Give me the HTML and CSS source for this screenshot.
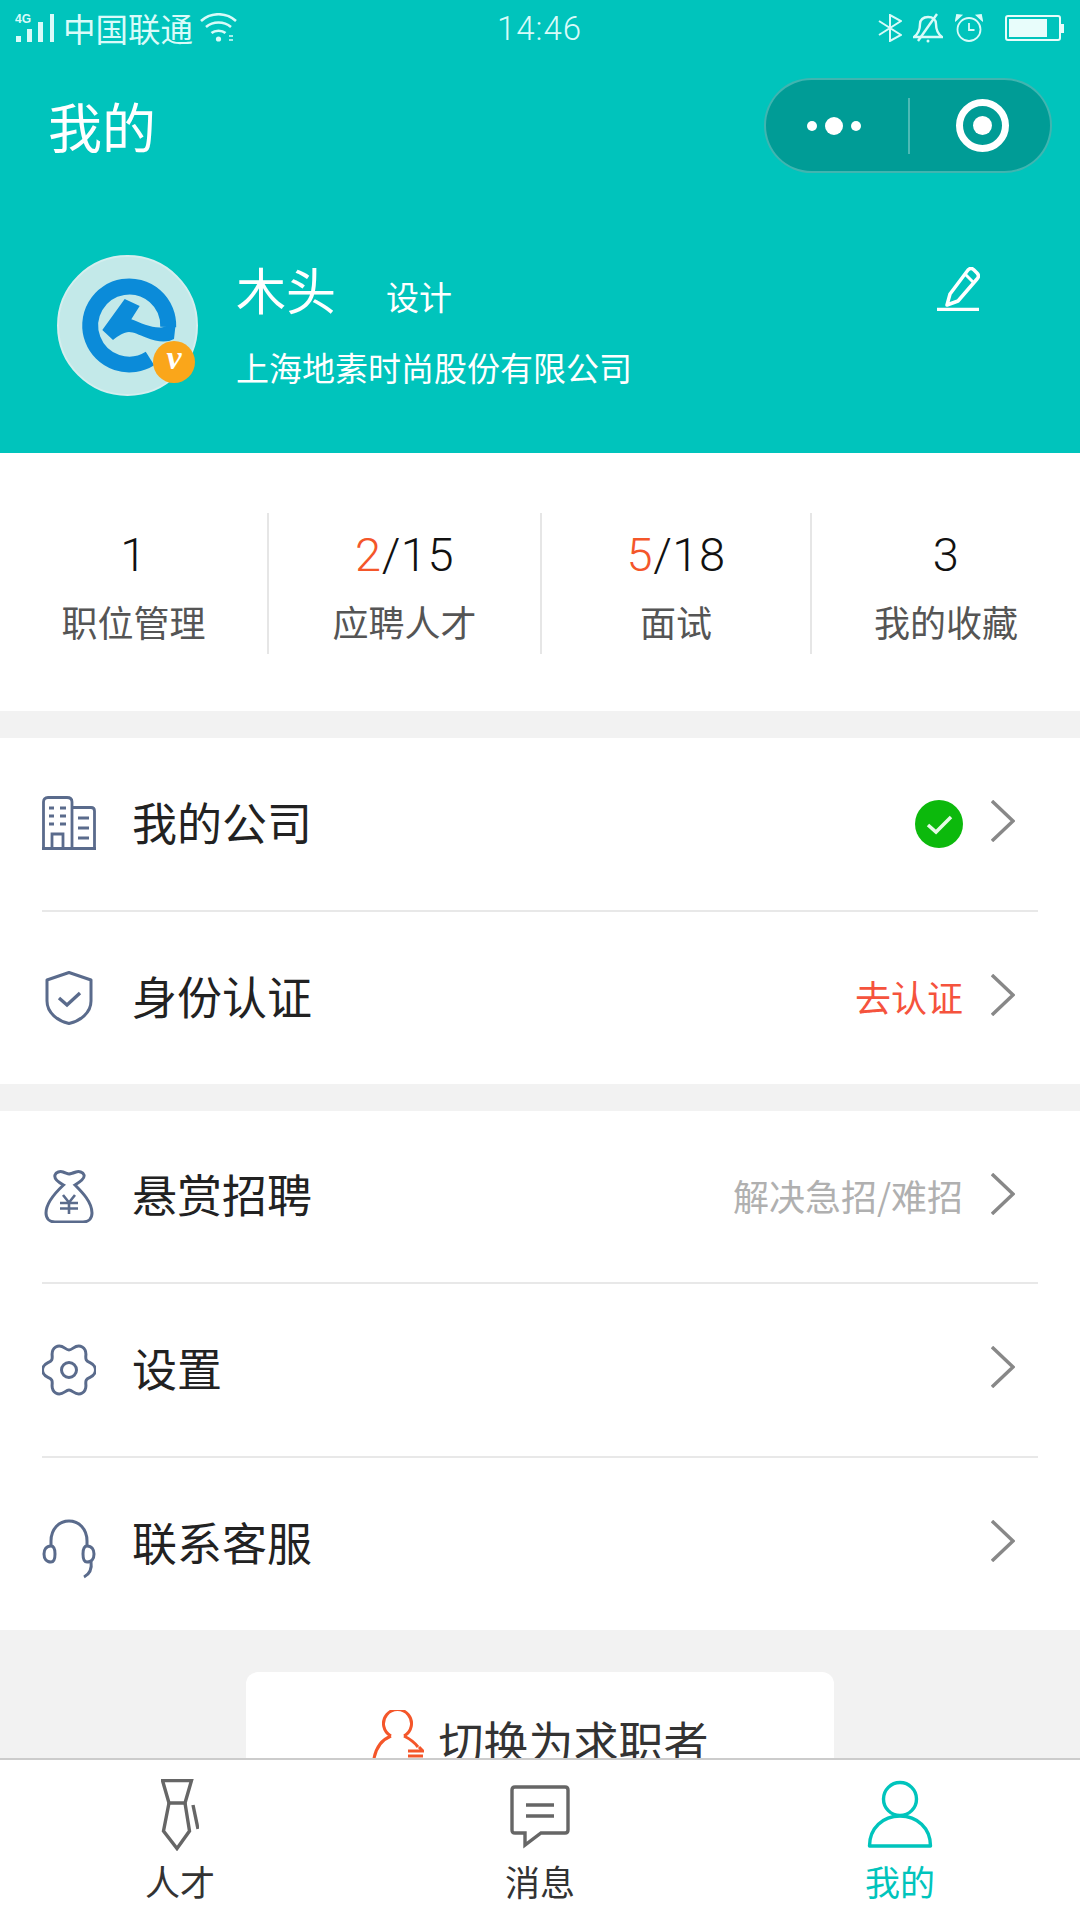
FILE: index.html
```html
<!DOCTYPE html>
<html>

<head>
	<title>我的</title>
	<link rel="stylesheet" href="styles.css">
</head>

<body>
	<div class="page">
		<main class="main">
			<section class="header">
				<div class="status-bar">
					<div class="status-left">
						<svg class="signal" width="40" height="30" viewBox="0 0 40 30">
							<text x="0" y="10" class="signal-text">4G</text>
							<rect x="1" y="23" width="5" height="6" fill="#d9fbf9"/>
							<rect x="12" y="16" width="5" height="13" fill="#d9fbf9"/>
							<rect x="23" y="9" width="5" height="20" fill="#d9fbf9"/>
							<rect x="35" y="1" width="4" height="28" fill="#d9fbf9"/>
						</svg>
						<span class="carrier">中国联通</span>
						<svg class="wifi" width="37" height="30" viewBox="0 0 37 30" fill="none" stroke="#d9fbf9" stroke-width="2.6">
							<path d="M1 8C11 -1 26 -1 36 8"/>
							<path d="M6 14C13 8 24 8 31 14"/>
							<path d="M11.500 20C15 17 22 17 25.500 20"/>
							<circle cx="18.500" cy="26" r="2.600" fill="#d9fbf9" stroke="none"/>
							<path d="M29 23H33M29 27H33" stroke-width="1.500"/>
						</svg>
					</div>
					<div class="status-time">14:46</div>
					<div class="status-right">
						<svg width="24" height="28" viewBox="0 0 24 28" fill="none" stroke="#d9fbf9" stroke-width="2">
							<path d="M1 7L23 21L12 27V1L23 7L1 21"/>
						</svg>
						<svg class="bell" width="30" height="30" viewBox="0 0 30 30" fill="none" stroke="#d9fbf9" stroke-width="2.400">
							<path d="M1 24H29C25 21 23 16 23 11C23 7 20 4 15 4C10 4 7 7 7 11C7 16 5 21 1 24Z"/>
							<path d="M5 28L24 1"/>
							<circle cx="15" cy="28" r="1.500" fill="#d9fbf9" stroke="none"/>
						</svg>
						<svg class="alarm" width="28" height="28" viewBox="0 0 28 28" fill="none" stroke="#d9fbf9" stroke-width="1.800">
							<circle cx="14" cy="15.500" r="11.500"/>
							<path d="M14 9V16H19.500"/>
							<path d="M1 6L6 1.500L2 1ZM27 6L22 1.500L26 1Z" fill="#d9fbf9"/>
						</svg>
						<div class="battery">
							<div class="battery-body"><div class="battery-level"></div></div>
							<div class="battery-cap"></div>
						</div>
					</div>
				</div>

				<div class="nav">
					<h1 class="title">我的</h1>
					<div class="capsule">
						<div class="capsule-more">
							<span class="dot"></span>
							<span class="dot big"></span>
							<span class="dot"></span>
						</div>
						<div class="capsule-close"><span class="target"></span></div>
					</div>
				</div>

				<div class="profile">
					<div class="avatar">
						<svg width="141" height="141" viewBox="0 0 141 141" fill="none">
							<path d="M111.200 72A39 39 0 1 0 93 103.500" stroke="#0b8bd9" stroke-width="16"/>
							<path d="M67.700 44L82.700 51L74.300 64.300C84 68 94 73 104 72.500C110 72 114 70 119 66L117 84C110 88 100 87 89 82.500C82 80 77 77 72 77C67 77 61 81 56 85L45.300 75Z" fill="#0b8bd9"/>
						</svg>
						<span class="badge">v</span>
					</div>
					<div class="profile-text">
						<div class="name-line">
							<span class="name">木头</span>
							<span class="job">设计</span>
						</div>
						<p class="company">上海地素时尚股份有限公司</p>
					</div>
					<svg class="edit" width="44" height="44" viewBox="0 0 44 44" fill="none" stroke="#fff">
						<path d="M14 27L11 38L22 34L41 12C43 10 43 8 41 6L38 3C36 1 34 1 32 3Z" stroke-width="3.500" stroke-linejoin="round"/>
						<path d="M29 7L37 15" stroke-width="3"/>
						<path d="M1 42.500H43" stroke-width="3.500"/>
					</svg>
				</div>
			</section>

			<section class="stats">
				<div class="stat">
					<p class="stat-num">1</p>
					<p class="stat-label">职位管理</p>
				</div>
				<div class="stat">
					<p class="stat-num"><span class="hot">2</span>/15</p>
					<p class="stat-label">应聘人才</p>
				</div>
				<div class="stat">
					<p class="stat-num"><span class="hot">5</span>/18</p>
					<p class="stat-label">面试</p>
				</div>
				<div class="stat">
					<p class="stat-num">3</p>
					<p class="stat-label">我的收藏</p>
				</div>
			</section>

			<section class="group">
				<div class="row">
					<svg class="row-icon building" width="54" height="54" viewBox="0 0 54 54" fill="none" stroke="#5a6b8c" stroke-width="2.800">
						<path d="M1.500 53V6C1.500 3 3 1.500 6 1.500H25C28 1.500 30 3 30 6V53"/>
						<path d="M30 11.500H49C52 11.500 52.500 13 52.500 15V53"/>
						<path d="M0 52.500H54"/>
						<path d="M7 12H12M18 12H24M7 20H12M18 20H24M7 28H12M18 28H24"/>
						<path d="M10 53V38H21V53"/>
						<path d="M36 22H47M36 32H47M36 42H47"/>
					</svg>
					<span class="row-label">我的公司</span>
					<span class="row-check">
						<svg width="48" height="48" viewBox="0 0 48 48">
							<circle cx="24" cy="24" r="24" fill="#0cb90c"/>
							<path d="M13 25L21 32L36 17" fill="none" stroke="#e6fbe6" stroke-width="3.500"/>
						</svg>
					</span>
					<svg class="chevron" width="24" height="42" viewBox="0 0 24 42" fill="none" stroke="#888" stroke-width="3.400">
						<path d="M1 1L22 21L1 41"/>
					</svg>
				</div>
				<div class="row">
					<svg class="row-icon" width="54" height="54" viewBox="0 0 54 54" fill="none" stroke="#5a6b8c" stroke-width="3">
						<path d="M5 9L27 1.500L49 9V30C49 42 38 50 27 52.500C16 50 5 42 5 30Z" stroke-linejoin="round"/>
						<path d="M17 27L25 34L38 22" stroke-width="3.400"/>
					</svg>
					<span class="row-label">身份认证</span>
					<span class="row-note warn">去认证</span>
					<svg class="chevron" width="24" height="42" viewBox="0 0 24 42" fill="none" stroke="#888" stroke-width="3.400">
						<path d="M1 1L22 21L1 41"/>
					</svg>
				</div>
			</section>

			<section class="group">
				<div class="row">
					<svg class="row-icon" width="54" height="54" viewBox="0 0 54 54" fill="none" stroke="#5a6b8c" stroke-width="3">
						<path d="M21.500 16C16 13 12 9 13 6C14 3 18 2 21 3C24 4 26 5 27 5C28 5 31 4 34 3C37 2 41 3 42 6C43 9 38 13 33 16C40 23 50 33 50 44C50 50 46 53 41 53H13C8 53 4 50 4 44C4 33 14 23 21.500 16Z"/>
						<path d="M21 26L27 33.500L33 26M27 33.500V45M18 34H36M18 39.500H36" stroke-width="2.600"/>
					</svg>
					<span class="row-label">悬赏招聘</span>
					<span class="row-note">解决急招/难招</span>
					<svg class="chevron" width="24" height="42" viewBox="0 0 24 42" fill="none" stroke="#888" stroke-width="3.400">
						<path d="M1 1L22 21L1 41"/>
					</svg>
				</div>
				<div class="row">
					<svg class="row-icon" width="54" height="54" viewBox="0 0 54 54" fill="none" stroke="#5a6b8c" stroke-width="3">
						<path d="M53.500 27C53.500 34.500 46.320 33.540 44.320 37C42.320 40.460 46.750 46.200 40.250 49.950C33.750 53.700 31 47 27 47C23 47 20.250 53.700 13.750 49.950C7.250 46.200 11.680 40.460 9.680 37C7.680 33.540 0.500 34.500 0.500 27C0.500 19.500 7.680 20.460 9.680 17C11.680 13.540 7.250 7.800 13.750 4.050C20.250 0.300 23 7 27 7C31 7 33.750 0.300 40.250 4.050C46.750 7.800 42.320 13.540 44.320 17C46.320 20.460 53.500 19.500 53.500 27Z"/>
						<circle cx="27" cy="27" r="7.500"/>
					</svg>
					<span class="row-label">设置</span>
					<svg class="chevron" width="24" height="42" viewBox="0 0 24 42" fill="none" stroke="#888" stroke-width="3.400">
						<path d="M1 1L22 21L1 41"/>
					</svg>
				</div>
				<div class="row">
					<svg class="row-icon headset" width="54" height="60" viewBox="0 0 54 60" fill="none" stroke="#5a6b8c" stroke-width="3">
						<path d="M9 27V22C9 10 17 2 27 2C37 2 45 10 45 22V27"/>
						<path d="M9 27C4 27 2 31 2 35C2 39 4 43 9 43C12 43 13 39 13 35C13 31 12 27 9 27Z"/>
						<path d="M45 27C50 27 52 31 52 35C52 39 50 43 45 43C42 43 41 39 41 35C41 31 42 27 45 27Z"/>
						<path d="M49 42C50 49 48 55 42 58"/>
					</svg>
					<span class="row-label">联系客服</span>
					<svg class="chevron" width="24" height="42" viewBox="0 0 24 42" fill="none" stroke="#888" stroke-width="3.400">
						<path d="M1 1L22 21L1 41"/>
					</svg>
				</div>
			</section>

			<div class="switch">
				<svg class="switch-icon" width="53" height="62" viewBox="0 0 53 62" fill="none" stroke="#f4562a" stroke-width="3">
					<path d="M20 26A14 14 0 1 1 33 26"/>
					<path d="M20 26C10 30 2 40 2 60"/>
					<path d="M33 26C39 29 44 33 47 37"/>
					<path d="M37 41H52L48 37M37 46H52"/>
				</svg>
				<span class="switch-text">切换为求职者</span>
			</div>
		</main>

		<nav class="tabbar">
			<div class="tab">
				<svg class="tab-icon" width="38" height="72" viewBox="0 0 38 72" fill="none" stroke="#666" stroke-width="3.400">
					<path d="M1.500 1.500H30.500L24 24H8Z"/>
					<path d="M8 24L2.500 52L16 69.500L28.500 52L24 24"/>
					<path d="M32 26L37 50"/>
				</svg>
				<span class="tab-label">人才</span>
			</div>
			<div class="tab">
				<svg class="tab-icon" width="60" height="72" viewBox="0 0 60 72" fill="none" stroke="#666" stroke-width="3.400">
					<path d="M5 8H55C57 8 58 9 58 11V51C58 53 57 54 55 54H31L15 66V54H5C3 54 2 53 2 51V11C2 9 3 8 5 8Z"/>
					<path d="M16 26H44M16 37H44"/>
				</svg>
				<span class="tab-label">消息</span>
			</div>
			<div class="tab active">
				<svg class="tab-icon" width="66" height="72" viewBox="0 0 66 72" fill="none" stroke="#00c4bc" stroke-width="3.400">
					<circle cx="33" cy="20" r="16.500"/>
					<path d="M2.500 67C2.500 49 16 37 33 37C50 37 63.500 49 63.500 67Z" stroke-linejoin="round"/>
				</svg>
				<span class="tab-label">我的</span>
			</div>
		</nav>
	</div>
</body>

</html>
```

FILE: styles.css
```css
body,
* {
	margin: 0;
	padding: 0;
	box-sizing: border-box;
}

body {
	font-family: "Noto Sans CJK SC", "Noto Sans", sans-serif;
	background: #f2f2f2;
	color: #222;
}

.page {
	display: flex;
	flex-direction: column;
	height: 1920px;
	width: 1080px;
	overflow: hidden;
}

.main {
	flex: 1;
	min-height: 0;
	overflow: hidden;
}

/* header */
.header {
	height: 453px;
	background: #00c4bc;
	color: #fff;
}

.status-bar {
	display: grid;
	grid-template-columns: 1fr auto 1fr;
	align-items: center;
	height: 56px;
	padding: 0 16px 0 15px;
	color: #d9fbf9;
}

.status-left {
	display: flex;
	align-items: center;
}

.signal-text {
	font-family: "Liberation Sans", sans-serif;
	font-size: 12px;
	font-weight: bold;
	fill: #d9fbf9;
}

.carrier {
	font-size: 32.500px;
	line-height: 56px;
	margin-left: 8px;
}

.wifi {
	margin-left: 7px;
}

.status-time {
	font-family: Roboto, sans-serif;
	font-size: 33px;
	font-weight: 300;
	letter-spacing: 1px;
}

.status-right {
	display: flex;
	align-items: center;
	justify-content: flex-end;
}

.bell {
	margin-left: 11px;
}

.alarm {
	margin-left: 12px;
}

.battery {
	display: flex;
	align-items: center;
	margin-left: 22px;
}

.battery-body {
	width: 56px;
	height: 26px;
	border: 2px solid #e8fdfb;
	border-radius: 3px;
	padding: 2px;
}

.battery-level {
	width: 38px;
	height: 18px;
	background: #e8fdfb;
}

.battery-cap {
	width: 3px;
	height: 9px;
	background: #e8fdfb;
}

.nav {
	display: flex;
	justify-content: space-between;
	align-items: center;
	height: 95px;
	margin-top: 22px;
	padding: 0 28px 0 48px;
}

.title {
	font-size: 54px;
	font-weight: 400;
}

.capsule {
	display: flex;
	align-items: center;
	width: 288px;
	height: 95px;
	background: #009c96;
	border: 2px solid rgba(255, 255, 255, 0.25);
	border-radius: 48px;
}

.capsule-more {
	display: flex;
	align-items: center;
	justify-content: center;
	gap: 8px;
	width: 144px;
	height: 56px;
	padding-right: 6px;
	border-right: 2px solid rgba(255, 255, 255, 0.3);
}

.dot {
	width: 10px;
	height: 10px;
	border-radius: 50%;
	background: #fff;
}

.dot.big {
	width: 18px;
	height: 18px;
}

.capsule-close {
	flex: 1;
	display: flex;
	justify-content: center;
	padding-left: 4px;
}

.target {
	display: flex;
	align-items: center;
	justify-content: center;
	width: 53px;
	height: 53px;
	border-radius: 50%;
	border: 7px solid #fff;
}

.target::after {
	content: "";
	width: 19px;
	height: 19px;
	border-radius: 50%;
	background: #fff;
}

.profile {
	display: flex;
	align-items: flex-start;
	margin-top: 82px;
	padding: 0 100px 0 57px;
}

.avatar {
	position: relative;
	flex: none;
	width: 141px;
	height: 141px;
	border-radius: 50%;
	background: #c3e9e9;
	border: 2px solid #d5eeee;
}

.avatar svg {
	display: block;
	margin: -2px;
}

.badge {
	position: absolute;
	right: 1px;
	bottom: 11px;
	width: 42px;
	height: 42px;
	border-radius: 50%;
	background: #faa61a;
	color: #fff;
	font-family: "Liberation Serif", serif;
	font-size: 34px;
	font-style: italic;
	font-weight: bold;
	line-height: 34px;
	text-align: center;
}

.profile-text {
	flex: 1;
	margin-left: 38px;
	padding-top: 3px;
}

.name-line {
	display: flex;
	align-items: center;
	height: 60px;
}

.name {
	font-size: 50px;
}

.job {
	font-size: 33px;
	margin-left: 50px;
	margin-top: 16px;
}

.company {
	font-size: 33px;
	line-height: 48px;
	margin-top: 25px;
}

.edit {
	margin-top: 12px;
}

/* stats */
.stats {
	display: grid;
	grid-template-columns: 269px 273px 270px 268px;
	height: 258px;
	padding-top: 60px;
	background: #fff;
}

.stat {
	height: 141px;
	text-align: center;
	border-right: 2px solid #e6e6e6;
}

.stat:last-child {
	border-right: none;
}

.stat-num {
	font-family: Roboto, sans-serif;
	font-size: 47px;
	font-weight: 300;
	letter-spacing: 0.500px;
	line-height: 54px;
	color: #111;
	margin-top: 15px;
}

.hot {
	color: #f4562a;
}

.stat-label {
	font-size: 36px;
	line-height: 52px;
	color: #555;
	margin-top: 13px;
}

/* menu groups */
.group {
	margin-top: 27px;
	background: #fff;
}

.row {
	display: flex;
	align-items: center;
	height: 173.500px;
	margin: 0 42px;
	border-bottom: 2px solid #e8e8e8;
}

.row:last-child {
	height: 172px;
	border-bottom: none;
}

.row-icon {
	flex: none;
}

.building {
	margin-bottom: 2px;
}

.headset {
	margin-top: 10px;
}

.row-label {
	flex: 1;
	font-size: 45px;
	margin-left: 36px;
	margin-bottom: 5px;
}

.row-check {
	display: flex;
}

.row-note {
	font-size: 36px;
	color: #b0b0b0;
	margin-bottom: 3px;
}

.row-note.warn {
	color: #f5533d;
}

.chevron {
	margin-left: 28px;
	margin-right: 23px;
	margin-bottom: 5px;
}

/* switch button */
.switch {
	display: flex;
	align-items: center;
	justify-content: center;
	gap: 14px;
	width: 588px;
	height: 138px;
	margin: 42px auto 0;
	background: #fff;
	border-radius: 12px;
}

.switch-text {
	font-size: 45px;
	color: #333;
}

/* tab bar */
.tabbar {
	display: grid;
	grid-template-columns: repeat(3, 1fr);
	flex: none;
	height: 162px;
	background: #fff;
	border-top: 2px solid #ccc;
}

.tab {
	display: flex;
	flex-direction: column;
	align-items: center;
	padding-top: 19px;
	color: #333;
}

.tab-label {
	font-size: 35px;
	line-height: 48px;
	margin-top: 6px;
}

.tab.active {
	color: #00c4bc;
}
```
